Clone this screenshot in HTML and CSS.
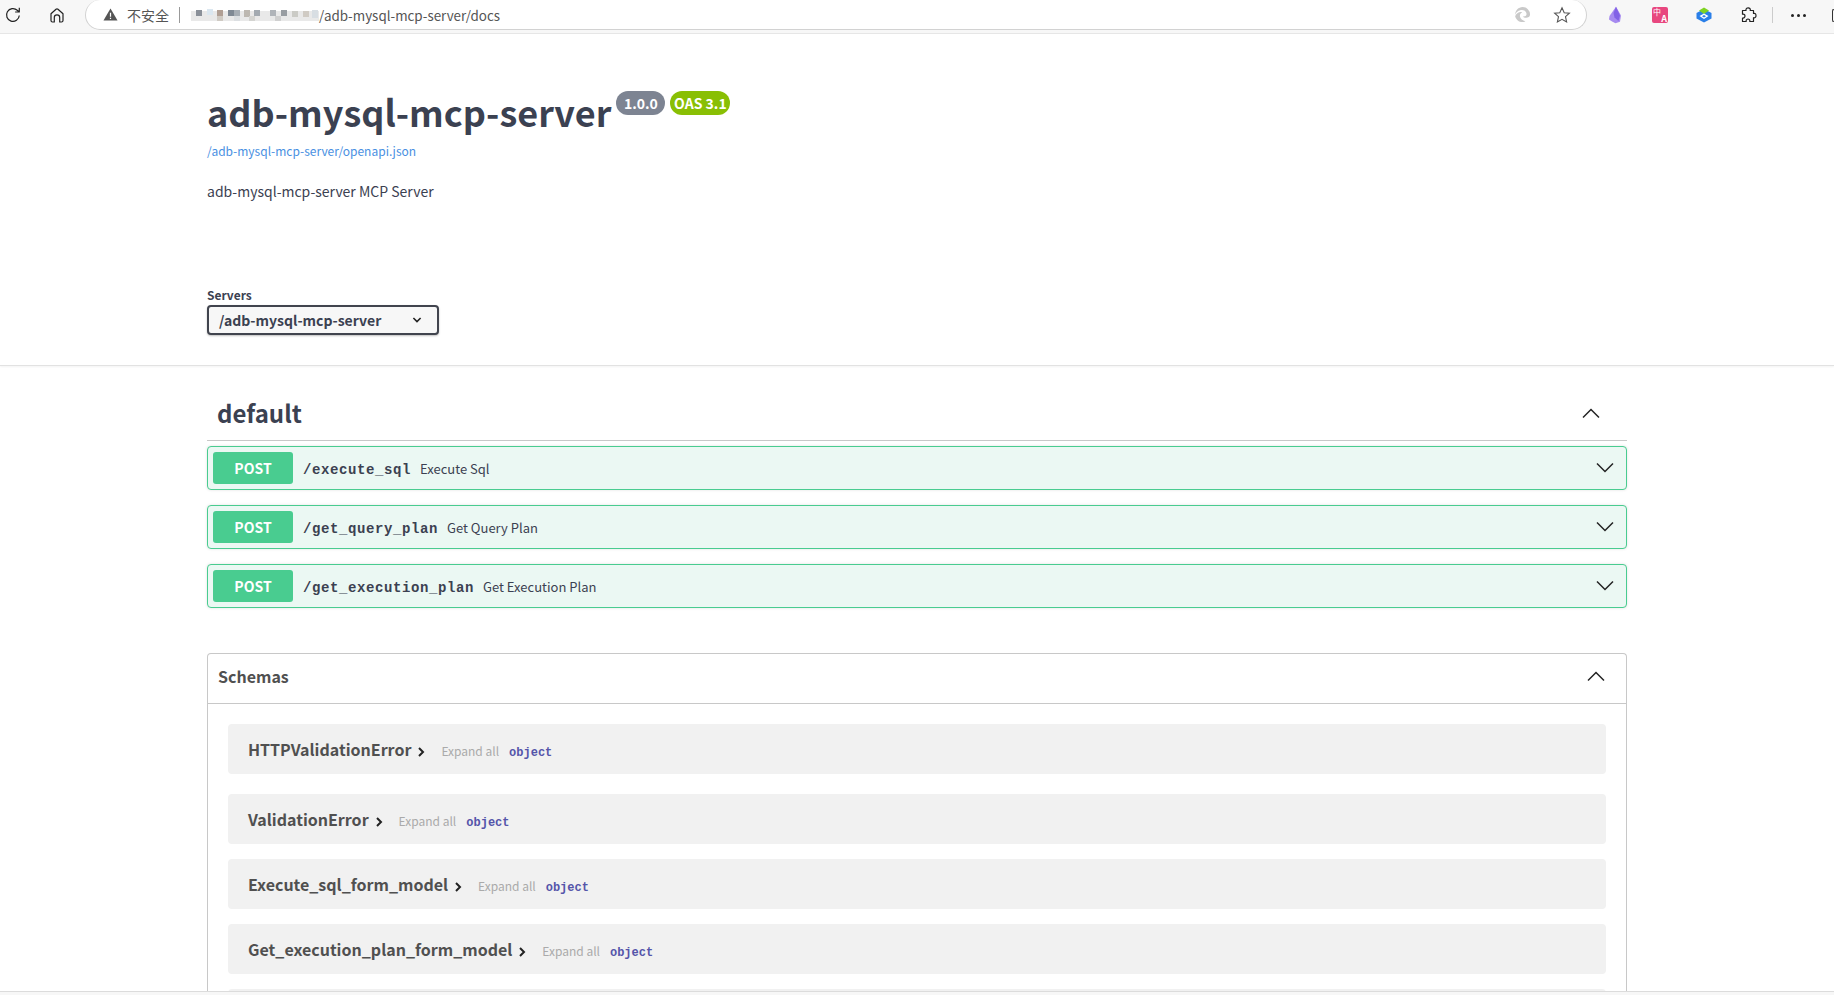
FILE: index.html
```html
<!DOCTYPE html>
<html lang="en">
<head>
<meta charset="UTF-8">
<meta name="viewport" content="width=device-width, initial-scale=1.0">
<title>adb-mysql-mcp-server - Swagger UI</title>
<link rel="stylesheet" href="styles.css">
</head>
<body>
<div class="page">
  <!-- browser toolbar -->
  <div class="toolbar">
    <svg class="tool-icon refresh" viewBox="0 0 18 18"><path d="M15.300 9.500a6.400 6.400 0 1 1-2-5.200L15.300 6M15.300 1.800V6h-4.200" /></svg>
    <svg class="tool-icon home" viewBox="0 0 18 18"><path d="M3 7.800 8 3.200a1.500 1.500 0 0 1 2 0l5 4.600v6.700a1.500 1.500 0 0 1-1.500 1.500h-1.800v-4.500a2.700 2.700 0 0 0-5.400 0V16H4.500A1.500 1.500 0 0 1 3 14.500z" /></svg>
    <div class="address">
      <svg class="warn" viewBox="0 0 16 16"><path d="M8 1.500 15.500 14.500H.5z" /><path class="warn-mark" d="M8 6v4.500M8 11.500v1.300" /></svg>
      <span class="warn-text">不安全</span>
      <span class="address-sep"></span>
      <!-- the host is pixelated out in the screenshot -->
      <svg class="host" viewBox="0 0 128 16">
        <rect x="0" y="4" width="128" height="10" fill="#e9e9e9" />
        <rect x="5" y="3" width="6" height="6" fill="#8a9099" />
        <rect x="16" y="2" width="6" height="6" fill="#dbe7f0" />
        <rect x="26" y="3" width="6" height="6" fill="#b09f94" />
        <rect x="37" y="3" width="6" height="6" fill="#7f8994" />
        <rect x="43" y="3" width="6" height="6" fill="#a6adb4" />
        <rect x="53" y="3" width="6" height="7" fill="#bdb8b1" />
        <rect x="63" y="3" width="6" height="6" fill="#a3aab1" />
        <rect x="79" y="3" width="6" height="6" fill="#b0b4b9" />
        <rect x="90" y="3" width="6" height="6" fill="#989da2" />
        <rect x="101" y="4" width="6" height="6" fill="#cbcbc6" />
        <rect x="112" y="4" width="6" height="6" fill="#d0cbc4" />
        <rect x="121" y="3" width="6" height="8" fill="#d8dee3" />
        <rect x="26" y="9" width="6" height="5" fill="#cfcac3" />
        <rect x="58" y="9" width="6" height="5" fill="#d4d4d1" />
        <rect x="84" y="9" width="6" height="5" fill="#d0d0d0" />
        <rect x="43" y="9" width="6" height="5" fill="#dcdfe2" />
      </svg>
      <span class="url">/adb-mysql-mcp-server/docs</span>
      <svg class="edge" viewBox="0 0 18 18"><path d="M9 1a8 8 0 0 1 8 8c0 2.300-2 3.500-4.200 3.500-1.500 0-2.900-.6-3.500-1.400 2.500.2 4-.9 4-2.600C13.300 6 11.200 4.300 8.500 4.300 5 4.300 2 6.700 1 9.500 1.300 4.800 4.800 1 9 1z" /><path d="M1.200 10.800c1-2.600 3.400-4.500 6-4.500.7 0 1.200.1 1.600.3-2 .8-2.900 2.600-2.500 4.500.4 2.200 2.700 4.500 5.800 5-1 .6-2 .9-3.100.9-3.800 0-6.900-2.600-7.800-6.200z" /></svg>
      <svg class="star" viewBox="0 0 18 18"><path d="M9 1.800 11.200 6.700 16.400 7.200 12.500 10.700 13.600 16 9 13.300 4.400 16 5.500 10.700 1.600 7.200 6.800 6.700z" /></svg>
    </div>
    <div class="extensions">
      <svg class="ext" viewBox="0 0 18 18"><path fill="#a78bf0" d="M10 .8 15 9.500l-1 6.200-4.500 1.500-3-1.500L3 13.500l.5-3.500z" /><path fill="#8262e6" d="M10 .8 7.500 7l1 4.500 4 3.500 1.500-5.500z" /></svg>
      <div class="ext-translate"><span>中</span><b>A</b></div>
      <svg class="ext ext-shield" viewBox="0 0 18 18"><path fill="#2a7fe8" d="M9 3 16.500 7v5.500L9 16.500 1.500 12.500V7z" /><path fill="#7ed321" d="M4 4.500 9 1.500l5 3L9 8z" /><path fill="#fff" d="M9 7.500 13.500 10 9 13 4.500 10z" /><path fill="#2a7fe8" d="M9 9l2 1.200-2 1.300-2-1.300z" /></svg>
      <svg class="tool-icon puzzle" viewBox="0 0 18 18"><path d="M7 4.500C6.600 2.600 8 1.800 9.200 1.800S11.800 2.800 11.200 4.500H14.500V7.500C16.500 7 17 8.500 17 9.700S16 12.300 14.500 11.700V15.500H10.800C11.200 13.800 10 13 9 13S6.800 13.800 7.200 15.500H3.500V12C5.200 12.400 6 11 6 10S5 7.700 3.500 8.200V4.500Z" /></svg>
      <span class="toolbar-sep"></span>
      <span class="dots"><i></i><i></i><i></i></span>
      <span class="edge-box"></span>
    </div>
  </div>

  <div class="content">
    <section class="info">
      <div class="title-row">
        <h2 class="title">adb-mysql-mcp-server</h2>
        <span class="badge badge-version">1.0.0</span>
        <span class="badge badge-oas">OAS 3.1</span>
      </div>
      <a class="spec-link" href="#">/adb-mysql-mcp-server/openapi.json</a>
      <p class="description">adb-mysql-mcp-server MCP Server</p>
      <div class="servers-title">Servers</div>
      <div class="server-select">
        <span>/adb-mysql-mcp-server</span>
        <svg viewBox="0 0 20 20"><path d="M5.500 7.500 10 12l4.500-4.500" /></svg>
      </div>
    </section>

    <div class="wrapper">
      <div class="tag-header">
        <h3>default</h3>
        <svg class="caret" viewBox="0 0 20 12"><path d="M2 10.500 10 2.500l8 8" /></svg>
      </div>

      <div class="opblock">
        <span class="method">POST</span>
        <span class="path">/execute_sql</span>
        <span class="summary">Execute Sql</span>
        <svg class="caret" viewBox="0 0 20 12"><path d="M2 1.500 10 9.500l8-8" /></svg>
      </div>
      <div class="opblock">
        <span class="method">POST</span>
        <span class="path">/get_query_plan</span>
        <span class="summary">Get Query Plan</span>
        <svg class="caret" viewBox="0 0 20 12"><path d="M2 1.500 10 9.500l8-8" /></svg>
      </div>
      <div class="opblock">
        <span class="method">POST</span>
        <span class="path">/get_execution_plan</span>
        <span class="summary">Get Execution Plan</span>
        <svg class="caret" viewBox="0 0 20 12"><path d="M2 1.500 10 9.500l8-8" /></svg>
      </div>

      <section class="schemas">
        <div class="schemas-header">
          <h4>Schemas</h4>
          <svg class="caret" viewBox="0 0 20 12"><path d="M2 10.500 10 2.500l8 8" /></svg>
        </div>
        <div class="schemas-body">
          <div class="model model-first">
            <span class="model-name">HTTPValidationError</span>
            <svg class="arrow" viewBox="0 0 10 12"><path d="M3 2l4 4-4 4" /></svg>
            <span class="expand">Expand all</span>
            <span class="type">object</span>
          </div>
          <div class="model">
            <span class="model-name">ValidationError</span>
            <svg class="arrow" viewBox="0 0 10 12"><path d="M3 2l4 4-4 4" /></svg>
            <span class="expand">Expand all</span>
            <span class="type">object</span>
          </div>
          <div class="model">
            <span class="model-name">Execute_sql_form_model</span>
            <svg class="arrow" viewBox="0 0 10 12"><path d="M3 2l4 4-4 4" /></svg>
            <span class="expand">Expand all</span>
            <span class="type">object</span>
          </div>
          <div class="model">
            <span class="model-name">Get_execution_plan_form_model</span>
            <svg class="arrow" viewBox="0 0 10 12"><path d="M3 2l4 4-4 4" /></svg>
            <span class="expand">Expand all</span>
            <span class="type">object</span>
          </div>
          <div class="model"></div>
        </div>
      </section>
    </div>
  </div>

  <div class="bottom-strip"></div>
</div>
</body>
</html>
```

FILE: styles.css
```css
* {
  box-sizing: border-box;
}

html,
body {
  margin: 0;
  padding: 0;
  height: 100%;
  overflow: hidden;
}

body {
  font-family: "Noto Sans CJK SC", "Noto Sans", sans-serif;
  color: #3b4151;
  background-color: #fff;
}

.page {
  display: flex;
  flex-direction: column;
  height: 100vh;
}

/* browser toolbar */
.toolbar {
  display: flex;
  align-items: center;
  flex: none;
  height: 34px;
  padding: 0 0 3px 4px;
  background-color: #f7f7f7;
  border-bottom: 1px solid #e6e6e6;
}

.tool-icon {
  flex: none;
  width: 18px;
  height: 18px;
  fill: none;
  stroke: #222;
  stroke-width: 1.200;
  stroke-linejoin: round;
}

.home {
  margin-left: 26px;
}

.address {
  display: flex;
  align-items: center;
  flex: none;
  width: 1502px;
  height: 30px;
  margin-left: 19px;
  padding-left: 17px;
  background-color: #fff;
  border: 1px solid #d2d2d2;
  border-top: 0;
  border-radius: 15px;
}

.warn {
  width: 15px;
  height: 15px;
  fill: #555;
}

.warn-mark {
  stroke: #fff;
  stroke-width: 1.300;
  fill: none;
}

.warn-text {
  margin-left: 9px;
  font-size: 14px;
  color: #555;
}

.address-sep {
  width: 1px;
  height: 16px;
  margin: 0 11px 0 10px;
  background-color: #999;
}

.host {
  flex: none;
  width: 128px;
  height: 16px;
  filter: blur(0.600px);
}

.url {
  font-size: 13.400px;
  color: #555;
  white-space: nowrap;
}

.edge {
  width: 17px;
  height: 17px;
  margin-left: auto;
  fill: #c9c9c9;
}

.star {
  width: 18px;
  height: 18px;
  margin-left: 22px;
  margin-right: 15px;
  fill: none;
  stroke: #555;
  stroke-width: 1.100;
}

.extensions {
  display: flex;
  align-items: center;
  flex: 1;
  padding-left: 19px;
}

.ext {
  flex: none;
  width: 18px;
  height: 18px;
}

.ext-translate {
  display: grid;
  flex: none;
  width: 16px;
  height: 16px;
  margin-left: 28px;
  padding: 1px;
  border-radius: 2px;
  background-color: #e8477f;
  color: #fff;
  font-size: 8px;
  line-height: 7px;
}

.ext-translate b {
  justify-self: end;
  font-size: 9px;
  font-weight: 700;
}

.ext-shield {
  margin-left: 27px;
}

.puzzle {
  margin-left: 26px;
}

.toolbar-sep {
  flex: none;
  width: 1px;
  height: 16px;
  margin-left: 15px;
  background-color: #ccc;
}

.dots {
  display: flex;
  gap: 3px;
  margin-left: 18px;
}

.dots i {
  width: 3px;
  height: 3px;
  background-color: #222;
  border-radius: 50%;
}

.edge-box {
  flex: none;
  width: 6px;
  height: 13px;
  margin-left: 26px;
  border: 1px solid #333;
  border-right: 0;
  border-radius: 2px 0 0 2px;
}

/* page content */
.content {
  flex: 1;
  overflow: hidden;
}

.info {
  height: 332px;
  padding: 41px 0 0 207px;
  border-bottom: 1px solid #e2e2e2;
  box-shadow: 0 1px 2px rgba(0, 0, 0, 0.05);
}

.title-row {
  display: flex;
  align-items: flex-start;
  height: 72px;
}

.title {
  margin: 0;
  font-size: 36px;
  font-weight: 700;
  line-height: 72px;
  height: 72px;
  white-space: nowrap;
}

.badge {
  height: 24px;
  margin-top: 16px;
  border-radius: 12px;
  font-size: 14px;
  font-weight: 700;
  line-height: 24px;
  text-align: center;
  color: #fff;
}

.badge-version {
  width: 49px;
  margin-left: 5px;
  background-color: #7d8492;
}

.badge-oas {
  width: 60px;
  margin-left: 5px;
  background-color: #89bf04;
}

.spec-link {
  display: block;
  margin-top: -6px;
  font-size: 12px;
  line-height: 20px;
  color: #4990e2;
  text-decoration: none;
}

.description {
  margin: 20px 0 0;
  font-size: 14px;
  line-height: 21px;
}

.servers-title {
  margin-top: 85px;
  font-size: 12px;
  font-weight: 700;
  line-height: 16px;
}

.server-select {
  display: flex;
  align-items: center;
  justify-content: space-between;
  width: 232px;
  height: 30px;
  margin-top: 2px;
  padding: 0 12px 0 10px;
  background-color: #f7f7f7;
  border: 2px solid #41444e;
  border-radius: 4px;
  box-shadow: 0 1px 2px rgba(0, 0, 0, 0.25);
  font-size: 14px;
  font-weight: 700;
}

.server-select svg {
  width: 16px;
  height: 16px;
  fill: none;
  stroke: #222;
  stroke-width: 2;
}

.wrapper {
  width: 1420px;
  margin-left: 207px;
}

.tag-header {
  display: flex;
  align-items: flex-end;
  justify-content: space-between;
  height: 75px;
  padding: 0 26px 9px 10px;
  border-bottom: 1px solid #c8c8c8;
}

.tag-header h3 {
  margin: 0;
  font-size: 24px;
  font-weight: 700;
  line-height: 36px;
}

.tag-header .caret {
  margin-bottom: 12px;
}

.caret {
  flex: none;
  width: 20px;
  height: 12px;
  fill: none;
  stroke: #222;
  stroke-width: 1.500;
}

.opblock {
  display: flex;
  align-items: center;
  height: 44px;
  margin-top: 5px;
  margin-bottom: 15px;
  padding: 0 11px 0 5px;
  background-color: #ebf8f3;
  border: 1px solid #49cc90;
  border-radius: 4px;
  box-shadow: 0 0 3px rgba(0, 0, 0, 0.12);
}

.opblock + .opblock {
  margin-top: 0;
}

.method {
  flex: none;
  width: 80px;
  height: 32px;
  background-color: #49cc90;
  border-radius: 3px;
  color: #fff;
  font-size: 14px;
  font-weight: 700;
  line-height: 32px;
  text-align: center;
}

.path {
  margin: 4px 0 0 10px;
  font-family: "Liberation Mono", monospace;
  font-size: 14px;
  font-weight: 700;
  letter-spacing: 0.600px;
  color: #3b4151;
}

.summary {
  margin-left: 9px;
  font-size: 13px;
  color: #3b4151;
}

.opblock .caret {
  margin-left: auto;
}

.schemas {
  height: 400px;
  margin-top: 45px;
  border: 1px solid #c8c8c8;
  border-bottom: 0;
  border-radius: 4px 4px 0 0;
}

.schemas-header {
  display: flex;
  align-items: center;
  justify-content: space-between;
  height: 50px;
  padding: 0 20px 6px 10px;
  border-bottom: 1px solid #c8c8c8;
}

.schemas-header h4 {
  margin: 0;
  font-size: 16px;
  font-weight: 700;
  color: #505050;
}

.schemas-body {
  padding: 20px 20px 0;
}

.model {
  display: flex;
  align-items: center;
  height: 50px;
  margin-bottom: 15px;
  padding-left: 20px;
  background-color: #f1f1f1;
  border-radius: 4px;
}

.model-first {
  margin-bottom: 20px;
}

.model-name {
  font-size: 16px;
  font-weight: 700;
  color: #505050;
}

.arrow {
  width: 10px;
  height: 12px;
  margin: 6px 0 0 5px;
  fill: none;
  stroke: #222;
  stroke-width: 2;
}

.expand {
  margin: 2px 0 0 15px;
  font-size: 12px;
  color: #aaa;
}

.type {
  margin: 8px 0 0 10px;
  font-family: "Liberation Mono", monospace;
  font-size: 12px;
  font-weight: 700;
  color: #55a;
}

.bottom-strip {
  flex: none;
  height: 4px;
  background-color: #f7f7f7;
  border-top: 1px solid #dcdcdc;
}
```
